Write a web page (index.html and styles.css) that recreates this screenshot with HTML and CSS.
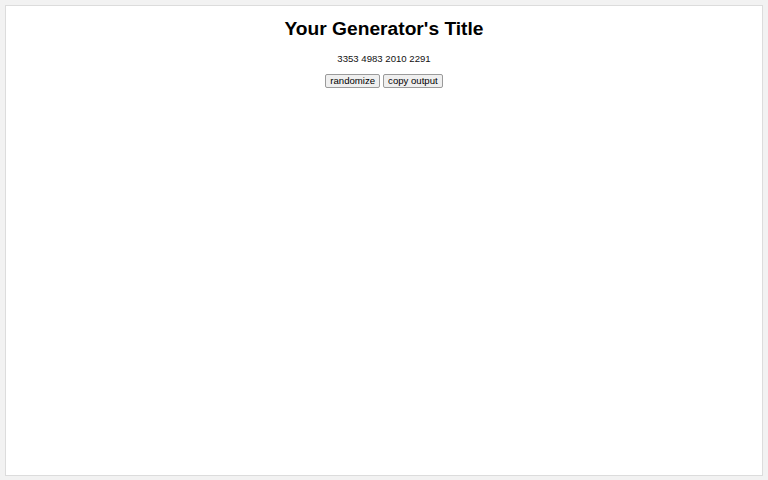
FILE: index.html
```html
<!DOCTYPE html>
<html>
<head>
<meta charset="utf-8">
<link rel="stylesheet" href="styles.css">
</head>
<body>
<div class="frame">
  <h1 class="title">Your Generator's Title</h1>
  <div class="output">3353 4983 2010 2291</div>
  <div class="controls">
    <button class="btn">randomize</button>
    <button class="btn">copy output</button>
  </div>
</div>
</body>
</html>
```
FILE: styles.css
```css
html, body {
  margin: 0;
  padding: 0;
  background: #f2f2f2;
}
body {
  padding: 5px;
  box-sizing: border-box;
  height: 480px;
}
.frame {
  box-sizing: border-box;
  height: 471px;
  background: #ffffff;
  border: 1px solid #dcdcdc;
  text-align: center;
  font-family: "Liberation Sans", Arial, sans-serif;
  color: #000;
  padding-top: 11px;
}
.title {
  margin: 0;
  font-size: 19.2px;
  font-weight: bold;
  line-height: 24px;
}
.output {
  margin-top: 12px;
  font-size: 9.6px;
  line-height: 12px;
  color: #111;
}
.controls {
  margin-top: 9px;
  display: flex;
  justify-content: center;
  gap: 3px;
}
.btn {
  font-family: "Liberation Sans", Arial, sans-serif;
  font-size: 9.6px;
  line-height: 12px;
  height: 14px;
  padding: 0 4px;
  background: #efefef;
  border: 1px solid #9a9a9a;
  border-radius: 2px;
  color: #000;
}
```
